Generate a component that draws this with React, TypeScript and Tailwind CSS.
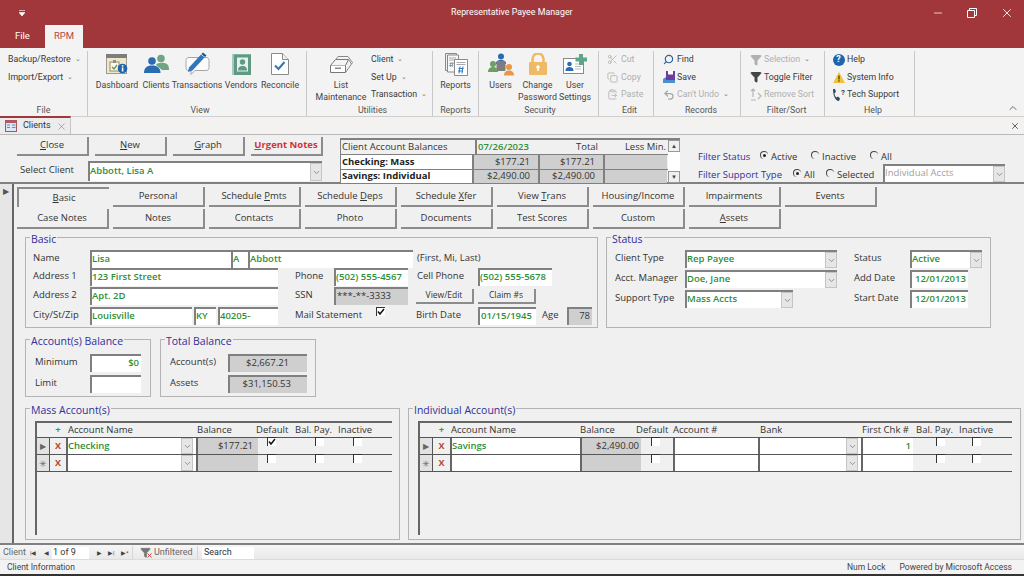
import type { ReactNode } from "react";
import { ChevronDown, ChevronUp, ClipboardPaste, Copy, Filter, Minus, Scissors, Search, Undo2, X } from "lucide-react";

function Caret() {
  return <span className="ml-[4px] inline-block align-middle text-[7px] leading-none text-[#777]">⌄</span>;
}

function DashboardIcon() {
  return (
    <svg width="24" height="22" viewBox="0 0 24 22">
      <rect x="1.5" y="1.5" width="20" height="19" fill="#f1e6c8" stroke="#9a9a9a" />
      <rect x="1" y="1" width="21" height="4" fill="#7d7d7d" />
      <rect x="5" y="9" width="9" height="9" fill="#fbf6e6" stroke="#8d8d6a" />
      <rect x="8" y="7" width="3" height="3" fill="#8d8d8d" />
      <path d="M7 14l2 2 3-4" fill="none" stroke="#5c9a58" strokeWidth="1.3" />
      <circle cx="17.5" cy="15.5" r="4.8" fill="#1f65ad" />
      <rect x="16.8" y="14.5" width="1.6" height="4" fill="#fff" />
      <rect x="16.8" y="12.2" width="1.6" height="1.5" fill="#fff" />
    </svg>
  );
}

function ClientsIcon() {
  return (
    <svg width="25" height="20" viewBox="0 0 25 20">
      <circle cx="17" cy="4.5" r="3.8" fill="#6fa584" />
      <path d="M12 11c1-2.5 9-3 11.500-.5 1 1 1.500 3 1.500 5.500h-7z" fill="#6fa584" />
      <circle cx="8" cy="7" r="3.800" fill="#2b6cb0" />
      <path d="M0 19c0-5 2.500-7.500 8-7.500s8.500 2.500 8.500 7.500z" fill="#2b6cb0" />
    </svg>
  );
}

function TransactionsIcon() {
  return (
    <svg width="27" height="24" viewBox="0 0 27 24">
      <path d="M5 5.500h17c2 0 3 1 3 3v7c0 2-1 3-3 3h-11l-4 4v-4H5c-2 0-3-1-3-3v-7c0-2 1-3 3-3z" fill="#fbfbfb" stroke="#a6a6a6" />
      <path d="M5 15.500L17 2.500l3.500 3-12 13-4.500 1.500z" fill="#2f76bb" />
      <path d="M17.500 2l1.500-1.500 3.500 3-1.500 1.500z" fill="#174f87" />
    </svg>
  );
}

function VendorsIcon() {
  return (
    <svg width="19" height="21" viewBox="0 0 19 21">
      <rect x="0" y="0" width="19" height="21" fill="#a8c8bb" />
      <rect x="2" y="0.500" width="17" height="20.500" fill="#5f9b84" />
      <rect x="5" y="3.500" width="11" height="14" fill="#e9f1ed" />
      <circle cx="10.500" cy="8" r="2.700" fill="#5f9b84" />
      <path d="M6 16.500c0-3.500 2-4.500 4.500-4.500s4.500 1 4.500 4.500z" fill="#5f9b84" />
    </svg>
  );
}

function ReconcileIcon() {
  return (
    <svg width="18" height="22" viewBox="0 0 18 22">
      <path d="M.5.500h11l6 6v15H.500z" fill="#fff" stroke="#8a8a8a" />
      <path d="M11.500.500v6h6" fill="#eee" stroke="#8a8a8a" />
      <path d="M4 12.500l3.500 3.500 6-7" fill="none" stroke="#2f76bb" strokeWidth="2" />
    </svg>
  );
}

function ListIcon() {
  return (
    <svg width="23" height="17" viewBox="0 0 23 17">
      <path d="M.5 9.500h15v7H.500z" fill="#fff" stroke="#777" />
      <path d="M.5 9.500l5-6h13l-3 6" fill="#f4f4f4" stroke="#777" />
      <path d="M6 3.500l2-3h10l4.500 6-7 10M18.500 3.500l3 4.500" fill="none" stroke="#888" />
      <rect x="5" y="11.500" width="6" height="1.500" fill="#888" />
    </svg>
  );
}

function ReportsIcon() {
  return (
    <svg width="24" height="24" viewBox="0 0 24 24">
      <path d="M1.500 1.500h11v17h-11z" fill="#eee" stroke="#8a8a8a" />
      <path d="M3.500 3h11v17h-11z" fill="#f7f7f7" stroke="#8a8a8a" />
      <path d="M10.500 7.500h13v16h-13z" fill="#fff" stroke="#8a8a8a" />
      <path d="M5 6h7M5 8h5M12.500 10.500h9M12.500 12.500h9" stroke="#aaa" />
      <path d="M14.500 16.500h5M14 19h5M16 14.500l-1 7M19 14.500l-1 7" fill="none" stroke="#2f76bb" />
      <path d="M5.500 11.500h4M5 13.500h4M7 10l-.7 5M9 10l-.7 5" fill="none" stroke="#7a8fa5" strokeWidth=".8" />
    </svg>
  );
}

function UsersIcon() {
  return (
    <svg width="26" height="23" viewBox="0 0 26 23">
      <circle cx="13" cy="3.500" r="3" fill="#2b6cb0" />
      <path d="M8 11c0-3 2-4 5-4s5 1 5 4z" fill="#2b6cb0" />
      <rect x="8.500" y="8" width="9" height="10" rx="1" fill="#7d7d7d" />
      <circle cx="5" cy="11" r="3" fill="#6aa060" />
      <path d="M0 19c0-3.500 2-5 5-5s5 1.500 5 5z" fill="#6aa060" />
      <circle cx="21" cy="14" r="3" fill="#e8974a" />
      <path d="M16 22.500c0-3.500 2-5 5-5s5 1.500 5 5z" fill="#e8974a" />
    </svg>
  );
}

function LockIcon() {
  return (
    <svg width="18" height="22" viewBox="0 0 18 22">
      <path d="M3.500 9V6a5.500 5.500 0 0 1 11 0v3" fill="none" stroke="#efb863" strokeWidth="2.500" />
      <rect x="0" y="9" width="18" height="13" rx="1" fill="#f0b966" />
      <circle cx="9" cy="14" r="1.800" fill="#fff" />
      <rect x="8.200" y="14" width="1.600" height="4" fill="#fff" />
    </svg>
  );
}

function UserSettingsIcon() {
  return (
    <svg width="24" height="20" viewBox="0 0 24 20">
      <rect x="0.500" y="4.500" width="20" height="15" fill="#fff" stroke="#8a8a8a" />
      <circle cx="6.500" cy="10" r="2.300" fill="#2b6cb0" />
      <path d="M2.500 17c0-3 1.500-4 4-4s4 1 4 4z" fill="#2b6cb0" />
      <path d="M12 10h6M12 12.500h6M12 15h6" stroke="#bbb" />
      <path d="M16 0h4v3.500h4v4h-4V11h-4V7.500h-3.500v-4H16z" fill="#5fa58a" />
    </svg>
  );
}

function SaveIcon() {
  return (
    <svg width="12" height="12" viewBox="0 0 12 12">
      <path d="M3 0h9v9H3z" fill="#6b3fa0" />
      <rect x="5" y="0" width="5" height="3.500" fill="#fff" />
      <path d="M0 8l3-2v3h9v3H0z" fill="#4a8fd0" />
    </svg>
  );
}

function HelpIcon() {
  return (
    <span className="flex h-[12px] w-[12px] items-center justify-center rounded-full bg-[#1f65ad] text-[9px] font-bold leading-none text-white">?</span>
  );
}

function WarnIcon() {
  return (
    <svg width="12" height="11" viewBox="0 0 12 11">
      <path d="M6 0l6 11H0z" fill="#f3c13c" />
      <rect x="5.300" y="3.500" width="1.400" height="4" fill="#5a4510" />
      <rect x="5.300" y="8.300" width="1.400" height="1.400" fill="#5a4510" />
    </svg>
  );
}

function TechIcon() {
  return (
    <span className="flex items-start">
      <svg width="9" height="13" viewBox="0 0 9 13">
        <path d="M1 1l2 0 1 3-1.500 1c0 2 .8 3.500 2 4.500l1.500-1 2 2-1 2.500c-4 0-6-6-6-12z" fill="#2d4a5e" />
      </svg>
      <span className="text-[8px] font-bold leading-[9px] text-[#2d4a5e]">?</span>
    </span>
  );
}

function RemoveSortIcon() {
  return (
    <svg width="12" height="13" viewBox="0 0 12 13">
      <path d="M3 1v8M1 3l2-2 2 2M1 12h5M8 5l3 3-3 3" fill="none" stroke="#b5b5b5" strokeWidth="1.200" />
    </svg>
  );
}

function FormIcon() {
  return (
    <svg width="12" height="12" viewBox="0 0 12 12">
      <rect x="0.500" y="0.500" width="11" height="11" fill="#dde6f3" stroke="#a25a5f" />
      <rect x="0.500" y="0.500" width="11" height="2.500" fill="#b9585c" />
      <path d="M2 5h3M2 7.500h3M7 5h3.500M7 7.500h3.500" stroke="#5b8fc7" />
    </svg>
  );
}

function BigButton({ className, icon, label }: { className: string; icon: ReactNode; label: ReactNode }) {
  return (
    <div className={`flex flex-col items-center ${className}`}>
      <div className="flex h-[26px] items-center">{icon}</div>
      <div className="mt-[2px] text-center leading-[12px]">{label}</div>
    </div>
  );
}

function SmallRow({ icon, muted, children }: { icon?: ReactNode; muted?: boolean; children: ReactNode }) {
  return (
    <div className={`flex h-[17.500px] items-center whitespace-nowrap ${muted ? "text-[#b0b0b0]" : "text-[#3a3a3a]"}`}>
      {icon ? <span className="mr-[2px] flex w-[13px] justify-center">{icon}</span> : null}
      {children}
    </div>
  );
}

function Group({ className, label, children }: { className: string; label: string; children: ReactNode }) {
  return (
    <div className={`flex h-[65px] shrink-0 flex-col border-r border-[#c8c8c8] ${className}`}>
      <div className="flex h-[52px] flex-1">{children}</div>
      <div className="h-[13px] pt-px text-center leading-[12px] text-[#555]">{label}</div>
    </div>
  );
}

function Ribbon() {
  return (
    <div className="flex h-[69px] shrink-0 border-b border-[#cfcfcf] bg-[#f3f3f3] pt-[3px] font-['Roboto',sans-serif] text-[8.800px] text-[#444]">
      <Group className="w-[88px]" label="File">
        <div className="pl-[8px]">
          <SmallRow>Backup/Restore<Caret /></SmallRow>
          <SmallRow>Import/Export<Caret /></SmallRow>
        </div>
      </Group>
      <Group className="w-[219px] pl-[6px]" label="View">
        <BigButton className="w-[46px]" icon={<DashboardIcon />} label="Dashboard" />
        <BigButton className="w-[32px]" icon={<ClientsIcon />} label="Clients" />
        <BigButton className="w-[50px]" icon={<TransactionsIcon />} label="Transactions" />
        <BigButton className="w-[38px]" icon={<VendorsIcon />} label="Vendors" />
        <BigButton className="w-[40px]" icon={<ReconcileIcon />} label="Reconcile" />
      </Group>
      <Group className="w-[126px] pl-[6px]" label="Utilities">
        <BigButton className="w-[56px]" icon={<ListIcon />} label={<>List<br />Maintenance</>} />
        <div className="pl-[2px]">
          <SmallRow>Client<Caret /></SmallRow>
          <SmallRow>Set Up<Caret /></SmallRow>
          <SmallRow>Transaction<Caret /></SmallRow>
        </div>
      </Group>
      <Group className="w-[46px]" label="Reports">
        <BigButton className="w-[45px]" icon={<ReportsIcon />} label="Reports" />
      </Group>
      <Group className="w-[120px] pl-[3px]" label="Security">
        <BigButton className="w-[37px]" icon={<UsersIcon />} label="Users" />
        <BigButton className="w-[37px]" icon={<LockIcon />} label={<>Change<br />Password</>} />
        <BigButton className="w-[38px]" icon={<UserSettingsIcon />} label={<>User<br />Settings</>} />
      </Group>
      <Group className="w-[55px] pl-[7px]" label="Edit">
        <div>
          <SmallRow muted icon={<Scissors size={11} className="text-[#b8b8b8]" />}>Cut</SmallRow>
          <SmallRow muted icon={<Copy size={11} className="text-[#b8b8b8]" />}>Copy</SmallRow>
          <SmallRow muted icon={<ClipboardPaste size={11} className="text-[#b8b8b8]" />}>Paste</SmallRow>
        </div>
      </Group>
      <Group className="w-[87px] pl-[8px]" label="Records">
        <div>
          <SmallRow icon={<Search size={11} strokeWidth={2.5} className="-scale-x-100 text-[#2a5f9e]" />}>Find</SmallRow>
          <SmallRow icon={<SaveIcon />}>Save</SmallRow>
          <SmallRow muted icon={<Undo2 size={12} strokeWidth={2.5} className="text-[#a8a8a8]" />}>Can&apos;t Undo<Caret /></SmallRow>
        </div>
      </Group>
      <Group className="w-[84px] pl-[8px]" label="Filter/Sort">
        <div>
          <SmallRow muted icon={<Filter size={12} fill="#b0b0b0" className="text-[#b0b0b0]" />}>Selection<Caret /></SmallRow>
          <SmallRow icon={<Filter size={12} fill="#444" className="text-[#444]" />}>Toggle Filter</SmallRow>
          <SmallRow muted icon={<RemoveSortIcon />}>Remove Sort</SmallRow>
        </div>
      </Group>
      <Group className="w-[90px] pl-[7px]" label="Help">
        <div>
          <SmallRow icon={<HelpIcon />}>Help</SmallRow>
          <SmallRow icon={<WarnIcon />}>System Info</SmallRow>
          <SmallRow icon={<TechIcon />}>Tech Support</SmallRow>
        </div>
      </Group>
      <div className="flex flex-1 items-end justify-end pb-[2px] pr-[5px]">
        <ChevronUp size={12} className="text-[#666]" />
      </div>
    </div>
  );
}

function Raised({ className, children }: { className: string; children?: ReactNode }) {
  return (
    <div className={`flex shrink-0 items-center justify-center border-b-2 border-r-2 border-b-[#8c8c8c] border-r-[#8c8c8c] bg-[#f0f0f0] ${className}`}>
      <span>{children}</span>
    </div>
  );
}

function DropButton({ className = "" }: { className?: string }) {
  return (
    <div className={`flex h-full w-[12px] shrink-0 items-center justify-center border border-[#c4c4c4] bg-[#e6e6e6] ${className}`}>
      <ChevronDown size={9} className="text-[#777]" />
    </div>
  );
}

function Field({ className, value, gray, right }: { className: string; value?: string; gray?: boolean; right?: boolean }) {
  return (
    <div
      className={`flex h-[18px] shrink-0 items-center overflow-hidden whitespace-nowrap border-l-2 border-t-2 border-[#808080] pb-[2px] text-[9.500px] ${
        gray ? "bg-[#cfcfcf] font-normal text-[#333]" : "bg-white font-semibold text-[#2f8f36]"
      } ${right ? "justify-end pr-[2px]" : ""} ${className}`}
    >
      {value}
    </div>
  );
}

function Combo({ className, value, disabled }: { className: string; value?: string; disabled?: boolean }) {
  return (
    <div className={`flex h-[18px] shrink-0 items-center border-l-2 border-t-2 border-[#808080] bg-white text-[9.500px] ${disabled ? "text-[#a0a0a0]" : "font-semibold text-[#2f8f36]"} ${className}`}>
      <span className="flex-1 overflow-hidden whitespace-nowrap pb-[2px]">{value}</span>
      <DropButton />
    </div>
  );
}

function Label({ className, children }: { className: string; children: ReactNode }) {
  return <div className={`shrink-0 whitespace-nowrap pb-[2px] text-[#333] ${className}`}>{children}</div>;
}

function Box({ className, title, children }: { className: string; title: string; children: ReactNode }) {
  return (
    <div className={`relative shrink-0 border border-[#b4b4b4] ${className}`}>
      <div className="absolute left-[4px] top-[-6px] bg-[#f0f0f0] px-px text-[10.500px] leading-[14px] text-[#2f2f9a]">{title}</div>
      {children}
    </div>
  );
}

function Radio({ on, className = "" }: { on?: boolean; className?: string }) {
  return (
    <span className={`relative mr-[3px] inline-block h-[8px] w-[8px] shrink-0 -translate-y-[2px] rounded-full border-l border-t border-[#444] ${className}`}>
      {on ? <span className="absolute left-[2px] top-[2px] h-[3px] w-[3px] rounded-full bg-[#222]" /> : null}
    </span>
  );
}

function Check({ on }: { on?: boolean }) {
  return (
    <div className="relative h-[9px] w-[9px] shrink-0 border-l border-t border-[#333] bg-white">
      {on ? (
        <svg className="absolute left-0 top-0" width="8" height="8" viewBox="0 0 8 8">
          <path d="M1 3.500l2 2.500 4-5" fill="none" stroke="#111" strokeWidth="1.500" />
        </svg>
      ) : null}
    </div>
  );
}

function FormHeader() {
  const Cell = ({ className, children }: { className: string; children?: ReactNode }) => (
    <div className={`flex h-full items-center overflow-hidden whitespace-nowrap px-px ${className}`}>{children}</div>
  );
  return (
    <div className="flex h-[49px] shrink-0 border-b-2 border-[#808080] bg-[#f0f0f0] text-[9.500px]">
      <div className="w-[340px] shrink-0 pl-[17px] pt-[2px]">
        <div className="flex gap-[6px]">
          <Raised className="h-[19px] w-[72px] text-[#333]"><u>C</u>lose</Raised>
          <Raised className="h-[19px] w-[72px] text-[#333]"><u>N</u>ew</Raised>
          <Raised className="h-[19px] w-[72px] text-[#333]"><u>G</u>raph</Raised>
          <Raised className="h-[19px] w-[72px] font-bold text-[#d1323c]"><u>U</u>rgent Notes</Raised>
        </div>
        <div className="mt-[5px] flex items-center">
          <Label className="w-[71px] pl-[3px]">Select Client</Label>
          <Combo className="h-[20px] w-[234px]" value="Abbott, Lisa A" />
        </div>
      </div>
      <div className="mt-[3px] flex h-[45px] w-[340px] shrink-0 border-l border-t-2 border-[#808080]">
        <div className="flex flex-1 flex-col">
          <div className="flex h-[14px] text-[#333]">
            <Cell className="w-[134px]">Client Account Balances</Cell>
            <Cell className="w-[63px] border-l-2 border-[#808080] font-semibold text-[#2f8f36]">07/26/2023</Cell>
            <Cell className="w-[65px] justify-end pr-[5px]">Total</Cell>
            <Cell className="w-[64px] justify-end">Less Min.</Cell>
          </div>
          <div className="flex h-[15px] border-t border-[#808080]">
            <Cell className="w-[131px] bg-white font-bold text-[#222]">Checking: Mass</Cell>
            <Cell className="w-[66px] justify-end border-l-2 border-[#808080] bg-[#cfcfcf] pr-[8px] text-[#333]">$177.21</Cell>
            <Cell className="w-[65px] justify-end border-l-2 border-[#808080] bg-[#cfcfcf] pr-[8px] text-[#333]">$177.21</Cell>
            <Cell className="w-[64px] border-l-2 border-[#808080] bg-[#cfcfcf]" />
          </div>
          <div className="flex h-[14px] border-t border-[#808080]">
            <Cell className="w-[131px] bg-white font-bold text-[#222]">Savings: Individual</Cell>
            <Cell className="w-[66px] justify-end border-l-2 border-[#808080] bg-[#cfcfcf] pr-[8px] text-[#333]">$2,490.00</Cell>
            <Cell className="w-[65px] justify-end border-l-2 border-[#808080] bg-[#cfcfcf] pr-[8px] text-[#333]">$2,490.00</Cell>
            <Cell className="w-[64px] border-l-2 border-[#808080] bg-[#cfcfcf]" />
          </div>
        </div>
        <div className="flex w-[12px] flex-col">
          <div className="flex h-[12px] items-center justify-center border border-[#999] text-[6px] leading-none text-[#444]">▲</div>
          <div className="flex-1 bg-white" />
          <div className="flex h-[12px] items-center justify-center border border-[#999] text-[6px] leading-none text-[#444]">▼</div>
        </div>
      </div>
      <div className="pl-[18px] pt-[14px] text-[#333]">
        <div className="flex h-[16px] items-center">
          <span className="w-[62px] text-[#2f2f9a]">Filter Status</span>
          <Radio on /><span className="w-[40px]">Active</span>
          <Radio /><span className="w-[48px]">Inactive</span>
          <Radio /><span>All</span>
        </div>
        <div className="flex h-[17px] items-end">
          <span className="w-[95px] text-[#2f2f9a]">Filter Support Type</span>
          <Radio on className="mb-[3px]" /><span className="w-[22px]">All</span>
          <Radio className="mb-[3px]" /><span className="w-[46px]">Selected</span>
          <Combo className="h-[16px] w-[122px]" value="Individual Accts" disabled />
        </div>
      </div>
    </div>
  );
}

const tabRows = [
  [<><u>B</u>asic</>, "Personal", <>Schedule <u>P</u>mts</>, <>Schedule <u>D</u>eps</>, <>Schedule <u>X</u>fer</>, <>View <u>T</u>rans</>, "Housing/Income", "Impairments", "Events"],
  ["Case Notes", "Notes", "Contacts", "Photo", "Documents", "Test Scores", "Custom", <><u>A</u>ssets</>],
];

function FormTabs() {
  return (
    <div className="flex flex-col gap-[2px]">
      {tabRows.map((row, r) => (
        <div key={r} className="flex gap-[4px]">
          {row.map((t, i) =>
            r === 0 && i === 0 ? (
              <div key={i} className="flex h-[20px] w-[92px] items-center justify-center border-l-2 border-t-2 border-[#8c8c8c] text-[#333]"><span>{t}</span></div>
            ) : (
              <Raised key={i} className="h-[20px] w-[92px] text-[#333]">{t}</Raised>
            ),
          )}
        </div>
      ))}
    </div>
  );
}

function BasicGroup() {
  return (
    <Box className="h-[91px] w-[573px] pl-[7px] pt-[12px]" title="Basic">
      <div className="flex h-[18px] items-center">
        <Label className="w-[57px]">Name</Label>
        <Field className="w-[141px]" value="Lisa" />
        <Field className="w-[17px]" value="A" />
        <Field className="w-[165px]" value="Abbott" />
        <Label className="pl-[4px]">(First, Mi, Last)</Label>
      </div>
      <div className="flex h-[18px] items-center">
        <Label className="w-[57px]">Address 1</Label>
        <Field className="w-[188px]" value="123 First Street" />
        <Label className="w-[56px] pl-[17px]">Phone</Label>
        <Field className="w-[74px]" value="(502) 555-4567" />
        <Label className="w-[70px] pl-[9px]">Cell Phone</Label>
        <Field className="w-[74px]" value="(502) 555-5678" />
      </div>
      <div className="mt-px flex h-[18px] items-center">
        <Label className="w-[57px]">Address 2</Label>
        <Field className="w-[188px]" value="Apt. 2D" />
        <Label className="w-[56px] pl-[17px]">SSN</Label>
        <Field className="w-[74px] pl-px" gray value="***-**-3333" />
        <Raised className="ml-[8px] h-[15px] w-[58px] text-[8.500px] text-[#333]">View/Edit</Raised>
        <Raised className="ml-[4px] h-[15px] w-[58px] text-[8.500px] text-[#333]">Claim #s</Raised>
      </div>
      <div className="mt-[2px] flex h-[18px] items-center">
        <Label className="w-[57px]">City/St/Zip</Label>
        <Field className="w-[102px]" value="Louisville" />
        <Field className="ml-[2px] w-[22px]" value="KY" />
        <Field className="ml-[2px] w-[60px]" value="40205-" />
        <Label className="w-[98px] pl-[17px]">Mail Statement</Label>
        <div className="mb-[10px] w-[40px]"><Check on /></div>
        <Label className="w-[62px]">Birth Date</Label>
        <Field className="w-[58px] pl-px" value="01/15/1945" />
        <Label className="w-[31px] pl-[6px]">Age</Label>
        <Field className="w-[25px]" gray right value="78" />
      </div>
    </Box>
  );
}

function StatusGroup() {
  return (
    <Box className="flex h-[91px] w-[385px] pl-[8px] pt-[12px]" title="Status">
      <div className="flex w-[239px] flex-col gap-[2px]">
        <div className="flex h-[18px] items-center">
          <Label className="w-[70px]">Client Type</Label>
          <Combo className="w-[152px]" value="Rep Payee" />
        </div>
        <div className="flex h-[18px] items-center">
          <Label className="w-[70px]">Acct. Manager</Label>
          <Combo className="w-[152px]" value="Doe, Jane" />
        </div>
        <div className="flex h-[18px] items-center">
          <Label className="w-[70px]">Support Type</Label>
          <Combo className="w-[108px]" value="Mass Accts" />
        </div>
      </div>
      <div className="flex flex-col gap-[2px]">
        <div className="flex h-[18px] items-center">
          <Label className="w-[56px]">Status</Label>
          <Combo className="w-[72px]" value="Active" />
        </div>
        <div className="flex h-[18px] items-center">
          <Label className="w-[56px]">Add Date</Label>
          <Field className="w-[58px] pl-[3px]" value="12/01/2013" />
        </div>
        <div className="flex h-[18px] items-center">
          <Label className="w-[56px]">Start Date</Label>
          <Field className="w-[58px] pl-[3px]" value="12/01/2013" />
        </div>
      </div>
    </Box>
  );
}

function Selector({ current }: { current?: boolean }) {
  return (
    <div className="flex h-full w-[13px] shrink-0 items-center justify-center border-r border-[#555] bg-[#e2e2e2] text-[#666]">
      {current ? <span className="text-[8px] leading-none">▶</span> : <span className="text-[9px] leading-none">✳</span>}
    </div>
  );
}

function DeleteCell({ className }: { className: string }) {
  return <div className={`flex h-full shrink-0 items-center justify-center text-[9px] font-bold text-[#b5452c] ${className}`}>X</div>;
}

function GridCell({ className, children }: { className: string; children?: ReactNode }) {
  return <div className={`flex h-full shrink-0 items-center overflow-hidden whitespace-nowrap border-l-2 border-[#666] ${className}`}>{children}</div>;
}

function Tick({ lead, on }: { lead: string; on?: boolean }) {
  return (
    <>
      <div className={`h-px shrink-0 bg-[#555] ${lead}`} />
      <Check on={on} />
      <div className="w-[2px] shrink-0" />
    </>
  );
}

function MassGroup() {
  const row = (name: string, balance: string, on: boolean, current: boolean) => (
    <div className="flex h-[17px] border-t border-[#555]">
      <Selector current={current} />
      <DeleteCell className="w-[16px]" />
      <GridCell className="w-[130px] bg-white font-semibold text-[#2f8f36]">
        <span className="flex-1">{name}</span>
        <DropButton className="mr-[3px]" />
      </GridCell>
      <GridCell className="w-[62px] justify-end bg-[#cfcfcf] pr-[5px] text-[#333]">{balance}</GridCell>
      <div className="-mt-px flex h-full flex-1 items-start">
        <Tick lead="w-[9px]" on={on} />
        <Tick lead="w-[37px]" />
        <Tick lead="w-[27px]" />
        <div className="h-px flex-1 bg-[#555]" />
      </div>
    </div>
  );
  return (
    <Box className="h-[132px] w-[375px] pl-[9px] pt-[12px]" title="Mass Account(s)">
      <div className="h-[114px] w-[357px] border-l-2 border-t-2 border-[#666] text-[9.500px]">
        <div className="flex h-[14px] items-center text-[#333]">
          <div className="w-[13px] shrink-0" />
          <div className="w-[16px] shrink-0 text-center font-bold leading-none text-[#3f9a3f]">+</div>
          <div className="w-[130px] shrink-0 pl-[2px]">Account Name</div>
          <div className="w-[60px] shrink-0 pl-px">Balance</div>
          <div className="w-[39px] shrink-0">Default</div>
          <div className="w-[43px] shrink-0">Bal. Pay.</div>
          <div>Inactive</div>
        </div>
        {row("Checking", "$177.21", true, true)}
        {row("", "", false, false)}
        <div className="border-t border-[#555]" />
      </div>
    </Box>
  );
}

function IndividualGroup() {
  const row = (name: string, balance: string, first: string, current: boolean) => (
    <div className="flex h-[17px] border-t border-[#555]">
      <Selector current={current} />
      <DeleteCell className="w-[17px]" />
      <GridCell className="w-[130px] bg-white font-semibold text-[#2f8f36]">{name}</GridCell>
      <GridCell className="w-[61px] justify-end bg-[#cfcfcf] pr-[2px] text-[#333]">{balance}</GridCell>
      <div className="-mt-px flex h-full w-[32px] shrink-0 items-start">
        <div className="h-px w-[10px] bg-[#555]" />
        <Check />
        <div className="h-px w-[13px] bg-[#555]" />
      </div>
      <GridCell className="w-[85px] bg-white" />
      <GridCell className="w-[103px] bg-white"><span className="flex-1" /><DropButton className="mr-[3px]" /></GridCell>
      <GridCell className="w-[52px] justify-end bg-white pr-[2px] font-semibold text-[#2f8f36]">{first}</GridCell>
      <div className="-mt-px flex h-full flex-1 items-start">
        <Tick lead="w-[23px]" />
        <Tick lead="w-[25px]" />
        <div className="h-px flex-1 bg-[#555]" />
      </div>
    </div>
  );
  return (
    <Box className="h-[132px] w-[613px] pl-[9px] pt-[12px]" title="Individual Account(s)">
      <div className="h-[114px] w-[594px] border-l-2 border-t-2 border-[#666] text-[9.500px]">
        <div className="flex h-[14px] items-center text-[#333]">
          <div className="w-[13px] shrink-0" />
          <div className="w-[17px] shrink-0 text-center font-bold leading-none text-[#3f9a3f]">+</div>
          <div className="w-[130px] shrink-0 pl-px">Account Name</div>
          <div className="w-[56px] shrink-0">Balance</div>
          <div className="w-[37px] shrink-0">Default</div>
          <div className="w-[87px] shrink-0">Account #</div>
          <div className="w-[102px] shrink-0">Bank</div>
          <div className="w-[54px] shrink-0">First Chk #</div>
          <div className="w-[43px] shrink-0">Bal. Pay.</div>
          <div>Inactive</div>
        </div>
        {row("Savings", "$2,490.00", "1", true)}
        {row("", "", "", false)}
        <div className="border-t border-[#555]" />
      </div>
    </Box>
  );
}

function NavBar() {
  const arrow = "text-[6px] leading-none text-[#444]";
  return (
    <div className="flex h-[14px] shrink-0 items-center bg-gradient-to-b from-[#f6f6f6] to-[#e9e9e9] pt-px font-['Roboto',sans-serif] text-[9px] text-[#666]">
      <span className="w-[30px] shrink-0 pl-[3px]">Client</span>
      <span className={`w-[14px] ${arrow}`}>|◀</span>
      <span className={`w-[8px] ${arrow}`}>◀</span>
      <div className="flex h-[12px] w-[37px] shrink-0 items-center bg-white pl-px text-[#333]">1 of 9</div>
      <span className="w-[8px]" />
      <span className={`w-[11px] ${arrow}`}>▶</span>
      <span className={`w-[13px] ${arrow}`}>▶|</span>
      <span className={`w-[11px] ${arrow}`}>▶*</span>
      <div className="flex h-full w-[66px] items-center border-x border-[#d6d6d6] pl-[7px]">
        <span className="relative mr-[3px] inline-flex">
          <Filter size={11} fill="#777" className="text-[#777]" />
          <X size={7} strokeWidth={3} className="absolute -bottom-px -right-[2px] text-[#c0392b]" />
        </span>
        Unfiltered
      </div>
      <div className="ml-[4px] flex h-[12px] w-[52px] items-center bg-white pl-[2px] text-[#333]">Search</div>
    </div>
  );
}

export default function App() {
  return (
    <div className="flex h-[576px] w-[1024px] flex-col overflow-hidden bg-[#f0f0f0] font-['Open_Sans',sans-serif] text-[9.500px]">
      <div className="h-[48px] shrink-0 bg-[#a2373b] font-['Roboto',sans-serif] text-white">
        <div className="flex h-[25px] items-center pt-px">
          <span className="w-[451px] pl-[19px]">
            <svg width="6" height="6" viewBox="0 0 6 6">
              <path d="M0 .5h6M0 2.500h6L3 6z" fill="#fff" stroke="#fff" strokeWidth=".6" />
            </svg>
          </span>
          <span className="w-[401px] text-[8.850px]">Representative Payee Manager</span>
          <div className="flex flex-1 items-center justify-end gap-[23px] pr-[10px]">
            <Minus size={12} className="text-[#eec9ca]" />
            <svg width="10" height="10" viewBox="0 0 10 10">
              <path d="M.5 2.500h7v7h-7zM2.500 2.500v-2h7v7h-2" fill="none" stroke="#fff" />
            </svg>
            <X size={14} strokeWidth={1.5} className="text-white" />
          </div>
        </div>
        <div className="flex h-[23px] items-center">
          <span className="w-[45px] pl-[15px] text-[9.500px]">File</span>
          <span className="flex h-full w-[38px] items-center justify-center bg-[#f3f3f3] text-[#b5474b]">RPM</span>
        </div>
      </div>
      <Ribbon />
      <div className="flex h-[18px] shrink-0 items-end border-b border-[#b8b8b8] bg-[#f3f2f1] font-['Roboto',sans-serif]">
        <div className="flex h-[18px] w-[71px] items-center border-r border-t-2 border-r-[#c5c5c5] border-t-[#a2373b] bg-[#ececec] pl-[5px] text-[9px] text-[#333]">
          <FormIcon />
          <span className="ml-[6px] w-[33px]">Clients</span>
          <X size={11} strokeWidth={1.2} className="text-[#777]" />
        </div>
        <div className="flex h-full flex-1 items-center justify-end pr-[4px]">
          <X size={10} strokeWidth={2} className="text-[#444]" />
        </div>
      </div>
      <FormHeader />
      <div className="flex h-[361px] shrink-0 border-b-2 border-[#808080]">
        <div className="flex w-[14px] shrink-0 justify-center border-r-2 border-[#666] bg-[#e6e6e6] pt-[2px]">
          <span className="text-[8px] leading-[10px] text-[#555]">▶</span>
        </div>
        <div className="flex-1 pl-[3px] pt-[3px]">
          <FormTabs />
          <div className="ml-[8px] mt-[8px] flex gap-[8px]">
            <BasicGroup />
            <StatusGroup />
          </div>
          <div className="ml-[8px] mt-[11px] flex gap-[9px]">
            <Box className="h-[58px] w-[126px] pl-[9px] pt-[14px]" title="Account(s) Balance">
              <div className="flex h-[18px] items-center">
                <Label className="w-[55px]">Minimum</Label>
                <Field className="w-[51px]" right value="$0" />
              </div>
              <div className="mt-[3px] flex h-[18px] items-center">
                <Label className="w-[55px]">Limit</Label>
                <Field className="w-[51px]" />
              </div>
            </Box>
            <Box className="h-[58px] w-[156px] pl-[9px] pt-[14px]" title="Total Balance">
              <div className="flex h-[18px] items-center">
                <Label className="w-[58px]">Account(s)</Label>
                <Field className="w-[79px] pr-[18px]" gray right value="$2,667.21" />
              </div>
              <div className="mt-[3px] flex h-[18px] items-center">
                <Label className="w-[58px]">Assets</Label>
                <Field className="w-[79px] pr-[16px]" gray right value="$31,150.53" />
              </div>
            </Box>
          </div>
          <div className="ml-[8px] mt-[11px] flex gap-[8px]">
            <MassGroup />
            <IndividualGroup />
          </div>
        </div>
      </div>
      <NavBar />
      <div className="flex h-[15px] shrink-0 items-center justify-between border-t border-[#dcdcdc] bg-[#f3f3f3] px-[7px] font-['Roboto',sans-serif] text-[8.500px] text-[#444]">
        <span>Client Information</span>
        <div className="flex gap-[14px] pr-[5px]">
          <span>Num Lock</span>
          <span>Powered by Microsoft Access</span>
        </div>
      </div>
      <div className="h-[2px] shrink-0 bg-[#333]" />
    </div>
  );
}
